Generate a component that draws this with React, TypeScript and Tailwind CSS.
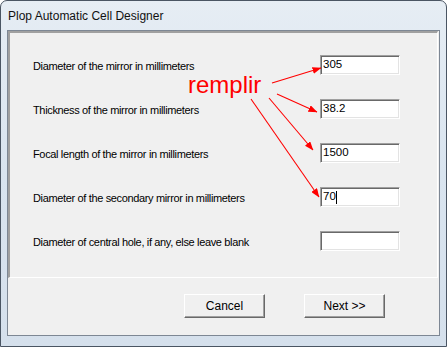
const FIELDS = [
    { label: "Diameter of the mirror in millimeters", value: "305" },
    { label: "Thickness of the mirror in millimeters", value: "38.2" },
    { label: "Focal length of the mirror in millimeters", value: "1500" },
    { label: "Diameter of the secondary mirror in millimeters", value: "70", caret: true },
    { label: "Diameter of central hole, if any, else leave blank", value: "" },
];

function Field({ label, value, caret }: { label: string; value: string; caret?: boolean }) {
    return (
        <div className="grid grid-cols-[287px_80px] items-center h-[20px]">
            <span className="text-[11px] tracking-[-0.35px] text-black translate-y-[1px]">{label}</span>
            <div className="h-[20px] bg-white border border-t-[#a0a0a0] border-l-[#a0a0a0] border-b-white border-r-white shadow-[inset_1px_1px_0_#696969,inset_-1px_-1px_0_#e3e3e3] flex items-center pl-[2px] text-[11.5px] text-black">
                {value}
                {caret && <span className="w-px h-[13px] bg-black" />}
            </div>
        </div>
    );
}

function WinButton({ children }: { children: React.ReactNode }) {
    return (
        <button className="w-[81px] h-[24px] bg-[#f0f0f0] border border-t-white border-l-white border-r-[#696969] border-b-[#696969] shadow-[inset_-1px_-1px_0_#a0a0a0] text-[12px] text-black">
            {children}
        </button>
    );
}

export default function App() {
    return (
        <div
            className="relative w-[447px] h-[347px] rounded-t-[7px] border border-[#4a5563] bg-gradient-to-b from-[#e6edf4] via-[#d9e4ef] to-[#d5e0ec] flex flex-col overflow-hidden"
            style={{ fontFamily: '"Liberation Sans", Arial, sans-serif' }}
        >
            {/* Title bar */}
            <div className="h-[29px] pl-[7px] flex items-center text-[12px] text-[#111]">
                Plop Automatic Cell Designer
            </div>

            {/* Client area */}
            <div className="ml-[6px] w-[433px] h-[306px] border border-[#7d8794] bg-[#f0f0f0] flex flex-col">
                {/* Sunken panel */}
                <div className="h-[247px] mr-[1px] border-t-2 border-l-2 border-t-[#a0a0a0] border-l-[#a0a0a0] border-r border-b border-r-white border-b-white pl-[23px] pt-[22px] flex flex-col gap-[24px]">
                    {FIELDS.map((f, i) => (
                        <Field key={i} label={f.label} value={f.value} caret={f.caret} />
                    ))}
                </div>

                {/* Buttons */}
                <div className="flex pl-[176px] pt-[16px] gap-[39px]">
                    <WinButton>Cancel</WinButton>
                    <WinButton>Next &gt;&gt;</WinButton>
                </div>
            </div>

            {/* Red annotation */}
            <svg className="absolute left-[-1px] top-[-1px] pointer-events-none" width="447" height="347">
                <defs>
                    <marker id="ah" markerWidth="9" markerHeight="7" refX="8.5" refY="3.5" orient="auto" markerUnits="userSpaceOnUse">
                        <path d="M0,0 L9,3.5 L0,7 z" fill="#ff0000" />
                    </marker>
                </defs>
                <text x="188" y="93" fill="#ff0000" fontSize="24" fontFamily='"Liberation Sans", Arial, sans-serif'>
                    remplir
                </text>
                <g stroke="#ff0000" strokeWidth="1.1" fill="none">
                    <line x1="272" y1="83" x2="321" y2="68" markerEnd="url(#ah)" />
                    <line x1="277" y1="94" x2="317" y2="112" markerEnd="url(#ah)" />
                    <line x1="269" y1="98" x2="313" y2="150" markerEnd="url(#ah)" />
                    <line x1="251" y1="99" x2="319" y2="197" markerEnd="url(#ah)" />
                </g>
            </svg>
        </div>
    );
}
